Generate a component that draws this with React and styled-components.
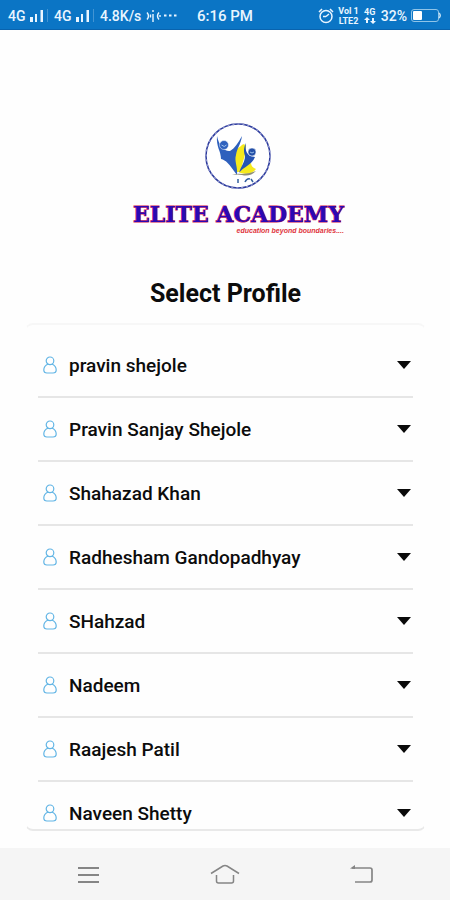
import React, { useState } from 'react';
import styled, { createGlobalStyle } from 'styled-components';

const GlobalStyle = createGlobalStyle`
  * {
    box-sizing: border-box;
  }
  body {
    margin: 0;
    background: #fefefe;
    color: #0c0c0c;
    font-family: Roboto, "Liberation Sans", sans-serif;
  }
`;

const Screen = styled.div`
  display: flex;
  flex-direction: column;
  height: 100vh;
`;

const StatusBar = styled.header`
  display: grid;
  grid-template-columns: 1fr auto 1fr;
  align-items: center;
  height: 30px;
  padding: 2px 8px 0;
  background: #0b75c5;
  border-bottom: 1px solid #0963ae;
  color: #e9f5ff;
  font-size: 14px;
  font-weight: 500;
  white-space: nowrap;
  svg {
    display: block;
    flex: none;
  }
`;

const StatusGroup = styled.div`
  display: flex;
  align-items: center;
  justify-content: ${({ $end }) => ($end ? 'flex-end' : 'flex-start')};
  gap: 4px;
`;

const Sim = styled.span`
  display: flex;
  align-items: center;
  gap: 4px;
  width: 42px;
`;

const Time = styled.time`
  font-size: 15px;
`;

const Stack = styled.span`
  display: flex;
  flex-direction: column;
  align-items: center;
  font-size: 9px;
  font-weight: 700;
  line-height: 10px;
`;

const Main = styled.main`
  display: flex;
  flex: 1;
  flex-direction: column;
  min-height: 0;
  padding: 92px 24px 17px 25px;
`;

const Brand = styled.div`
  display: flex;
  flex-direction: column;
  align-self: center;
  align-items: center;
  margin-left: 26px;
`;

const BrandName = styled.div`
  margin-top: 11px;
  color: #2a08b4;
  font-family: "DejaVu Serif", serif;
  font-size: 22px;
  font-weight: 700;
  line-height: 26px;
  white-space: nowrap;
  -webkit-text-stroke: 1px #d3204f;
  paint-order: stroke fill;
`;

const Tagline = styled.div`
  align-self: flex-end;
  color: #e0343c;
  font-family: "Liberation Sans", sans-serif;
  font-size: 7px;
  font-style: italic;
  font-weight: 700;
  line-height: 8px;
`;

const Title = styled.h1`
  margin: 42px 0 12px;
  font-size: 25px;
  font-weight: 700;
  line-height: 34px;
  text-align: center;
`;

const ProfileList = styled.ul`
  flex: 1;
  min-height: 0;
  margin: 0;
  padding: 9px 12px 0;
  overflow-y: auto;
  scrollbar-width: none;
  list-style: none;
  border: 1px solid transparent;
  border-top: 2px solid #f7f7f7;
  border-bottom: 2px solid #e9e9e9;
  border-radius: 8px;
`;

const ProfileButton = styled.button`
  display: flex;
  align-items: center;
  width: 100%;
  height: 64px;
  padding: 0 2px 0 5px;
  border: 0;
  border-bottom: 2px solid #e6e6e6;
  background: none;
  color: inherit;
  font: inherit;
  font-size: 19px;
  font-weight: 500;
  text-align: left;
  cursor: pointer;
`;

const ProfileName = styled.span`
  flex: 1;
  margin-left: 12px;
`;

const NavBar = styled.nav`
  display: flex;
  flex: none;
  align-items: center;
  justify-content: space-between;
  height: 52px;
  padding: 0 73px;
  background: #f5f5f5;
`;

const NavButton = styled.button`
  display: flex;
  padding: 0;
  border: 0;
  background: none;
  color: #858585;
  cursor: pointer;
`;

const profiles = [
  'pravin shejole',
  'Pravin Sanjay Shejole',
  'Shahazad Khan',
  'Radhesham Gandopadhyay',
  'SHahzad',
  'Nadeem',
  'Raajesh Patil',
  'Naveen Shetty',
];

const Signal = () => (
  <svg width="18" height="13" viewBox="0 0 18 13" fill="currentColor">
    <path d="M0 8h3v5H0zM5 5h2v8H5zM10.500 1h2.500v12h-2.500z" />
    <path d="M17 0h1v13h-1z" opacity="0.25" />
  </svg>
);

const Hotspot = () => (
  <svg width="34" height="12" viewBox="0 0 34 12" fill="none" stroke="currentColor" strokeWidth="1.400">
    <path d="M2 2.500q3 3.500 0 7M14 2.500q-3 3.500 0 7" />
    <path d="M8 0v2M8 4v8" />
    <path d="M5.500 4.500v3M15 5v2" />
    <path d="M19 5.500h2.500M24 5.500h2.500M29 5.500h2.500" strokeWidth="2" />
  </svg>
);

const Alarm = () => (
  <svg width="16" height="16" viewBox="0 0 16 16" fill="none" stroke="currentColor" strokeWidth="1.500">
    <circle cx="8" cy="8.500" r="6" />
    <path d="M8 8.500l3-2.500M8 8.500H5M1 4l3-3M15 4l-3-3" />
  </svg>
);

const DataArrows = () => (
  <svg width="14" height="7" viewBox="0 0 14 7" fill="currentColor">
    <path d="M1 3l3-3 3 3H5v3H3V3zM7 4h2V1h2v3h2l-3 3z" />
  </svg>
);

const Battery = () => (
  <svg width="31" height="13" viewBox="0 0 31 13">
    <rect x="0.500" y="0.500" width="27" height="12" rx="2.500" fill="none" stroke="#8fc4e8" />
    <rect x="2" y="2" width="9" height="9" rx="1" fill="#fff" />
    <path d="M28 4q2.500 2.500 0 5" fill="none" stroke="#c5e2f5" strokeWidth="1.500" />
  </svg>
);

const Emblem = () => (
  <svg width="68" height="68" viewBox="0 0 68 68">
    <circle cx="34" cy="34" r="32" fill="#fff" stroke="#2b3a9c" strokeWidth="1.500" />
    <circle cx="34" cy="34" r="32" fill="none" stroke="#8d93cd" strokeWidth="1.500" strokeDasharray="2 3" />
    <path d="M37 24c2-3 5-2 5 1 0 8-4 15-5 25h-4c-3-7-4-14-4-20 2-2 5-4 8-6z" fill="#f6ea1c" />
    <path d="M36 51c1-6 6-8 11-10 0 3 2 5 5 6-3 4-8 6-16 4z" fill="#f6ea1c" />
    <path d="M13 14c-1 11 4 15 4 23 5 1 8 5 16 16 1-8-3-14-1-20 1-7 5-11 6-19-4 7-7 12-12 15-5 1-11-5-13-15z" fill="#2e60bd" />
    <circle cx="20" cy="23" r="4.500" fill="#2e60bd" stroke="#fff" strokeWidth="0.500" />
    <path d="M17.500 23q3 3 5 0" fill="none" stroke="#a3c4ee" />
    <path d="M42 21c-3 6-2 9-1 13 0 6-4 10-6 17 4-6 13-8 16-16l-5-1c-4-3-5-7-4-13z" fill="#2553b2" />
    <circle cx="48" cy="30" r="4" fill="#2450a8" stroke="#fff" strokeWidth="0.500" />
    <path d="M46 30q2 2 4 0" fill="none" stroke="#9bc0e8" />
    <path d="M28 53q5-2 10-1 7 0 14-3-6 6-14 4-5-1-10 0z" fill="#8d8e78" />
    <path d="M34 57v4M41 60q2-4 5-3M47 57l2 3" fill="none" stroke="#34609f" strokeWidth="1.500" />
  </svg>
);

const Person = () => (
  <svg width="14" height="18" viewBox="0 0 14 18" fill="none" stroke="#62b5e5" strokeWidth="1.200">
    <circle cx="7" cy="4.800" r="3.800" />
    <path d="M5 8C2 9.500 .8 11.500.8 14c0 2 1.200 3 3.200 3h6c2 0 3.200-1 3.200-3 0-2.500-1.200-4.500-4.200-6" />
  </svg>
);

const Caret = () => (
  <svg width="14" height="8" viewBox="0 0 14 8">
    <path d="M0 0h14L7 8z" fill="#0a0a0a" />
  </svg>
);

const Profile = ({ name, selected, onSelect }) => (
  <li>
    <ProfileButton type="button" aria-expanded={selected} onClick={onSelect}>
      <Person />
      <ProfileName>{name}</ProfileName>
      <Caret />
    </ProfileButton>
  </li>
);

const App = () => {
  const [selected, setSelected] = useState(null);

  return (
    <Screen>
      <GlobalStyle />
      <StatusBar>
        <StatusGroup>
          <Sim>4G <Signal /></Sim>
          <Sim>4G <Signal /></Sim>
          <span>4.8K/s</span>
          <Hotspot />
        </StatusGroup>
        <Time>6:16 PM</Time>
        <StatusGroup $end>
          <Alarm />
          <Stack>
            <span>Vol 1</span>
            <span>LTE2</span>
          </Stack>
          <Stack>
            <span>4G</span>
            <DataArrows />
          </Stack>
          <span>32%</span>
          <Battery />
        </StatusGroup>
      </StatusBar>

      <Main>
        <Brand>
          <Emblem />
          <BrandName>ELITE ACADEMY</BrandName>
          <Tagline>education beyond boundaries....</Tagline>
        </Brand>
        <Title>Select Profile</Title>
        <ProfileList>
          {profiles.map((name) => (
            <Profile
              key={name}
              name={name}
              selected={selected === name}
              onSelect={() => setSelected(selected === name ? null : name)}
            />
          ))}
        </ProfileList>
      </Main>

      <NavBar>
        <NavButton type="button" aria-label="Menu">
          <svg width="30" height="22" viewBox="0 0 30 22" fill="none" stroke="currentColor" strokeWidth="2">
            <path d="M5 5h21M5 12h21M5 19h21" />
          </svg>
        </NavButton>
        <NavButton type="button" aria-label="Home">
          <svg width="30" height="22" viewBox="0 0 30 22" fill="none" stroke="currentColor" strokeWidth="1.500">
            <path d="M1 10.500L13 3q2-1 4 0L29 10.500" />
            <path d="M6.500 12v6q0 2 2 2h13q2 0 2-2v-6" />
          </svg>
        </NavButton>
        <NavButton type="button" aria-label="Back">
          <svg width="30" height="22" viewBox="0 0 30 22" fill="none" stroke="currentColor" strokeWidth="1.700">
            <path d="M5 5h18q2 0 2 2v10q0 2-2 2H8" />
            <path d="M3 5.500L8 2v4z" fill="currentColor" stroke="none" />
          </svg>
        </NavButton>
      </NavBar>
    </Screen>
  );
};

export default App;
